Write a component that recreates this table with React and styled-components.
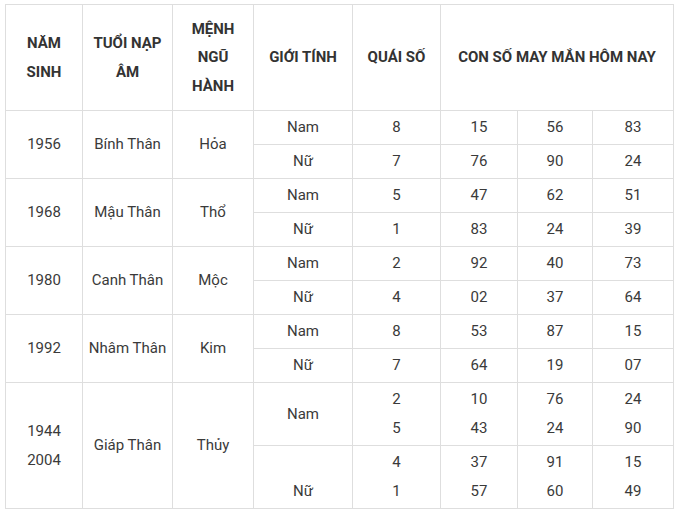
import React from "react";
import styled, { createGlobalStyle } from "styled-components";

const rows = [
  { year: ["1956"], name: "Bính Thân", menh: "Hỏa", nam: [["8", "15", "56", "83"]], nu: [["7", "76", "90", "24"]] },
  { year: ["1968"], name: "Mậu Thân", menh: "Thổ", nam: [["5", "47", "62", "51"]], nu: [["1", "83", "24", "39"]] },
  { year: ["1980"], name: "Canh Thân", menh: "Mộc", nam: [["2", "92", "40", "73"]], nu: [["4", "02", "37", "64"]] },
  { year: ["1992"], name: "Nhâm Thân", menh: "Kim", nam: [["8", "53", "87", "15"]], nu: [["7", "64", "19", "07"]] },
  {
    year: ["1944", "2004"],
    name: "Giáp Thân",
    menh: "Thủy",
    nam: [["2", "10", "76", "24"], ["5", "43", "24", "90"]],
    nu: [["4", "37", "91", "15"], ["1", "57", "60", "49"]],
    nuLow: true
  }
];

const widths = [77, 90, 81, 99, 88, 77, 75, 81];

const Lines = ({ items }) =>
  items.map((t, i) => (
    <React.Fragment key={i}>
      {i > 0 && <br />}
      {t}
    </React.Fragment>
  ));

const GenderRow = ({ group, label, values, low, first }) => (
  <tr>
    {first && (
      <>
        <Cell rowSpan={2}><Lines items={group.year} /></Cell>
        <Cell rowSpan={2}>{group.name}</Cell>
        <Cell rowSpan={2}>{group.menh}</Cell>
      </>
    )}
    <Cell>
      {low && values.length > 1 ? (
        <>
          <br />
          {label}
        </>
      ) : (
        label
      )}
    </Cell>
    {[0, 1, 2, 3].map((c) => (
      <Cell key={c}>
        <Lines items={values.map((v) => v[c])} />
      </Cell>
    ))}
  </tr>
);

const App = () => {
  return (
    <>
      <GlobalStyle />
      <Page>
        <Table>
          <colgroup>
            {widths.map((w, i) => (
              <col key={i} style={{ width: w }} />
            ))}
          </colgroup>
          <thead>
            <tr>
              <HeadCell>NĂM<br />SINH</HeadCell>
              <HeadCell>TUỔI NẠP<br />ÂM</HeadCell>
              <HeadCell>MỆNH<br />NGŨ<br />HÀNH</HeadCell>
              <HeadCell>GIỚI TÍNH</HeadCell>
              <HeadCell>QUÁI SỐ</HeadCell>
              <HeadCell colSpan={3}>CON SỐ MAY MẮN HÔM NAY</HeadCell>
            </tr>
          </thead>
          <tbody>
            {rows.map((g, i) => (
              <React.Fragment key={i}>
                <GenderRow group={g} label="Nam" values={g.nam} first />
                <GenderRow group={g} label="Nữ" values={g.nu} low={g.nuLow} />
              </React.Fragment>
            ))}
          </tbody>
        </Table>
      </Page>
    </>
  );
};

export default App;

const GlobalStyle = createGlobalStyle`
  body {
    margin: 0;
    background: #fff;
    font-family: Roboto, "Liberation Sans", sans-serif;
  }
`;

const Page = styled.div`
  padding: 4px 0 0 5px;
`;

const Table = styled.table`
  border-collapse: collapse;
  table-layout: fixed;
  width: 669px;
  color: #3a3a3a;
  font-size: 15px;
`;

const HeadCell = styled.th`
  border: 1px solid #dedede;
  height: 105px;
  padding: 0 4px;
  font-weight: 700;
  line-height: 28.5px;
  color: #333;
  text-align: center;
  vertical-align: middle;
`;

const Cell = styled.td`
  border: 1px solid #dedede;
  padding: 2px 4px;
  line-height: 29px;
  text-align: center;
  vertical-align: middle;
`;
